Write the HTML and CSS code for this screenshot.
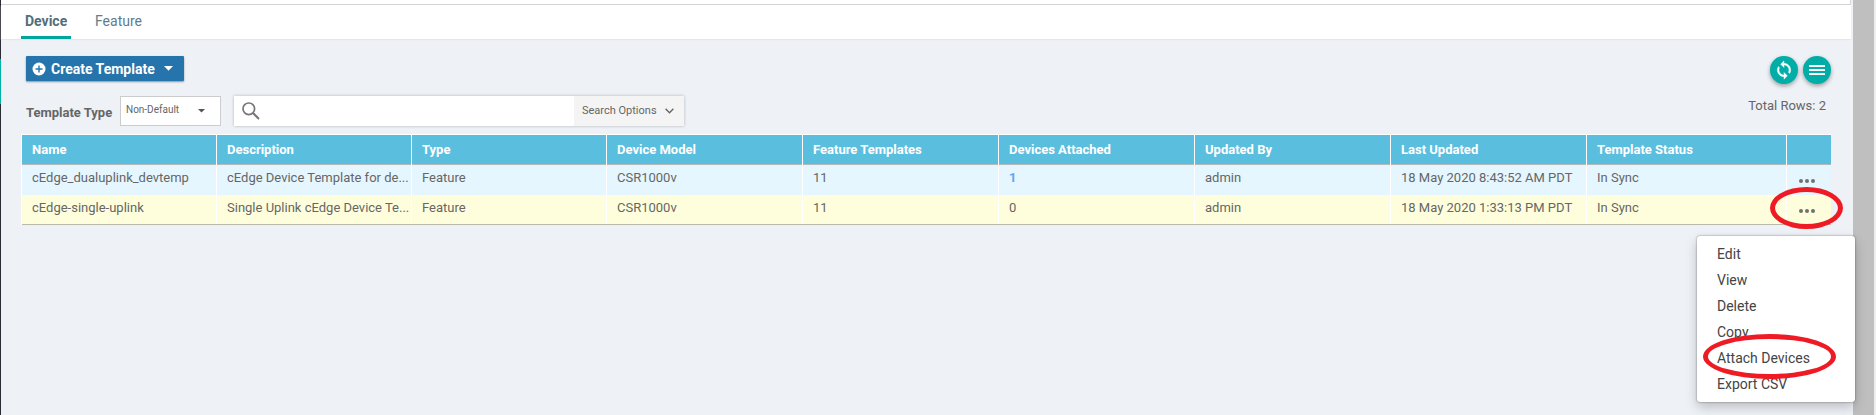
FILE: index.html
```html
<!DOCTYPE html>
<html lang="en">
<head>
<meta charset="utf-8">
<title>Templates</title>
<link rel="stylesheet" href="styles.css">
</head>
<body>
<div class="app">
  <div class="rail"><div class="rail-active"></div></div>
  <main class="page">
    <div class="topline"></div>
    <nav class="tabs">
      <a class="tab active"><span>Device</span></a>
      <a class="tab feature"><span>Feature</span></a>
    </nav>
    <div class="content">
      <div class="actions">
        <button class="create">
          <svg width="14" height="14" viewBox="0 0 14 14"><circle cx="7" cy="7" r="6.5" fill="#fff"/><path d="M7 3.5v7M3.5 7h7" stroke="#2574ab" stroke-width="1.4"/></svg>
          <span>Create Template</span>
          <svg class="caret" width="9" height="5" viewBox="0 0 9 5"><path d="M0 0h9L4.5 4.8z" fill="#fff"/></svg>
        </button>
        <div class="rounds">
          <button class="round"><svg width="20" height="20" viewBox="0 0 24 24"><path fill="#fff" stroke="#fff" stroke-width=".5" d="M12 4V1L8 5l4 4V6c3.31 0 6 2.69 6 6 0 1.01-.25 1.97-.7 2.8l1.46 1.46C19.54 15.03 20 13.57 20 12c0-4.42-3.58-8-8-8zm0 14c-3.31 0-6-2.69-6-6 0-1.01.25-1.97.7-2.8L5.24 7.74C4.46 8.97 4 10.43 4 12c0 4.42 3.58 8 8 8v3l4-4-4-4v3z"/></svg></button>
          <button class="round"><svg width="16" height="10" viewBox="0 0 16 10"><path d="M0 1h16M0 5h16M0 9h16" stroke="#fff" stroke-width="2"/></svg></button>
        </div>
      </div>
      <div class="filters">
        <label class="type-label">Template Type</label>
        <div class="select"><span>Non-Default</span><svg width="7" height="4" viewBox="0 0 7 4"><path d="M0 0h7L3.5 3.5z" fill="#555"/></svg></div>
        <div class="search">
          <div class="search-field"><svg width="18" height="18" viewBox="0 0 18 18"><circle cx="6.8" cy="6.8" r="5.8" fill="none" stroke="#757575" stroke-width="1.7"/><path d="M11 11l6 6" stroke="#757575" stroke-width="2"/></svg></div>
          <div class="search-options"><span>Search Options</span><svg width="9" height="6" viewBox="0 0 9 6"><path d="M.6 .8l3.9 3.9L8.4 .8" fill="none" stroke="#666" stroke-width="1.4"/></svg></div>
        </div>
        <div class="total">Total Rows: 2</div>
      </div>
      <div class="table">
        <div class="row head"><div>Name</div><div>Description</div><div>Type</div><div>Device Model</div><div>Feature Templates</div><div>Devices Attached</div><div>Updated By</div><div>Last Updated</div><div>Template Status</div><div></div></div>
        <div class="row synced"><div>cEdge_dualuplink_devtemp</div><div>cEdge Device Template for de...</div><div>Feature</div><div>CSR1000v</div><div>11</div><div class="link">1</div><div>admin</div><div>18 May 2020 8:43:52 AM PDT</div><div>In Sync</div><div class="more"><i></i><i></i><i></i></div></div>
        <div class="row selected"><div>cEdge-single-uplink</div><div>Single Uplink cEdge Device Te...</div><div>Feature</div><div>CSR1000v</div><div>11</div><div>0</div><div>admin</div><div>18 May 2020 1:33:13 PM PDT</div><div>In Sync</div><div class="more"><i></i><i></i><i></i></div></div>
      </div>
    </div>
  </main>
  <div class="scrollbar"></div>
</div>
<div class="menu">
  <div>Edit</div><div>View</div><div>Delete</div><div>Copy</div><div>Attach Devices</div><div>Export CSV</div>
</div>
<div class="ring ring-more"></div>
<div class="ring ring-attach"></div>
</body>
</html>
```
FILE: styles.css
```css
* { box-sizing: border-box; }
body { margin: 0; font-family: Roboto, "Liberation Sans", sans-serif; font-size: 13px; color: #666; overflow: hidden; }
button { font: inherit; border: 0; padding: 0; }
svg { display: block; flex: none; }
.app { display: flex; height: 415px; background: #eef1f6; }
.rail { width: 1px; background: #2b2b36; padding-top: 59px; }
.rail-active { height: 45px; background: #00b2a9; }
.page { flex: 1; display: flex; flex-direction: column; min-width: 0; }
.topline { height: 5px; margin-right: 2px; background: #fff; border-bottom: 1px solid #d4d4d4; border-right: 1px solid #d4d4d4; }
.tabs { display: flex; height: 34px; margin-right: 2px; padding-left: 20px; background: #fff; box-shadow: 0 1px 1px #e4e6ea; }
.tab { height: 34px; font-size: 14px; line-height: 33px; color: #607d8b; }
.tab.active { width: 50px; padding-left: 4px; font-weight: 700; color: #546e7a; border-bottom: 3px solid #00a59c; }
.tab.feature { margin-left: 24px; }
.content { padding: 17px 22px 0 20px; }
.actions { display: flex; justify-content: space-between; height: 39px; padding-left: 5px; }
.create { display: flex; align-items: center; width: 158px; height: 25px; padding-left: 6px; background: #2574ab; color: #fff; font-size: 14px; font-weight: 700; border-radius: 1px; box-shadow: 0 1px 2px rgba(0,0,0,.4); }
.create span { margin-left: 5px; white-space: nowrap; }
.caret { margin-left: 9px; }
.rounds { display: flex; gap: 5px; }
.round { width: 28px; height: 28px; border-radius: 50%; background: #00ada7; display: flex; align-items: center; justify-content: center; box-shadow: 0 2px 4px rgba(0,0,0,.35); }
.filters { display: flex; height: 39px; padding-left: 5px; }
.type-label { width: 94px; padding-top: 10px; line-height: 16px; font-weight: 700; white-space: nowrap; }
.select { display: flex; justify-content: space-between; width: 101px; height: 30px; margin-top: 1px; padding: 0 15px 0 5px; background: #fff; border: 1px solid #ccc; font-size: 10px; line-height: 26px; }
.select svg { margin-top: 12px; }
.search { display: flex; width: 450px; height: 30px; margin: 1px 0 0 13px; box-shadow: 0 0 3px rgba(0,0,0,.25); }
.search-field { width: 340px; background: #fff; padding: 6px 0 0 8px; }
.search-options { display: flex; align-items: center; flex: 1; gap: 8px; padding-left: 8px; background: #f4f4f4; font-size: 11px; }
.search-options span { line-height: 28px; white-space: nowrap; }
.total { margin-left: auto; padding: 3px 5px 0 0; line-height: 16px; }
.table { border-top: 1px solid #fff; border-left: 1px solid #fff; }
.row { display: grid; grid-template-columns: 195px 195px 195px 196px 196px 196px 196px 196px 200px 1fr; height: 30px; line-height: 26px; }
.row > div { padding-left: 10px; border-right: 1px solid #fff; white-space: nowrap; }
.row > div:last-child { border-right-color: transparent; }
.head { background: #5abedf; color: #fff; font-weight: 700; line-height: 30px; border-bottom: 1px solid #b4b8b9; }
.synced { background: #e5f6fe; }
.selected { background: #fffedc; border-bottom: 1px solid #b9b9ac; }
.row .link { color: #5fa4f5; font-weight: 700; }
.row .more { display: flex; gap: 2px; padding: 14px 0 0 12px; }
.more i { width: 4px; height: 4px; border-radius: 50%; background: #717171; }
.scrollbar { width: 23px; background: #bfbfbf; border-right: 2px solid #eee; }
.menu { position: absolute; left: 1697px; top: 236px; width: 158px; height: 166px; padding: 5px 0 0 20px; background: #fff; border-radius: 3px; box-shadow: 0 0 2px rgba(0,0,0,.5), 0 5px 12px rgba(0,0,0,.22); font-size: 14px; line-height: 26px; color: #444; }
.ring { position: absolute; border: 5px solid #ee1b24; border-radius: 50%; }
.ring-more { left: 1770px; top: 187px; width: 73px; height: 42px; }
.ring-attach { left: 1703px; top: 334px; width: 133px; height: 45px; }
```
